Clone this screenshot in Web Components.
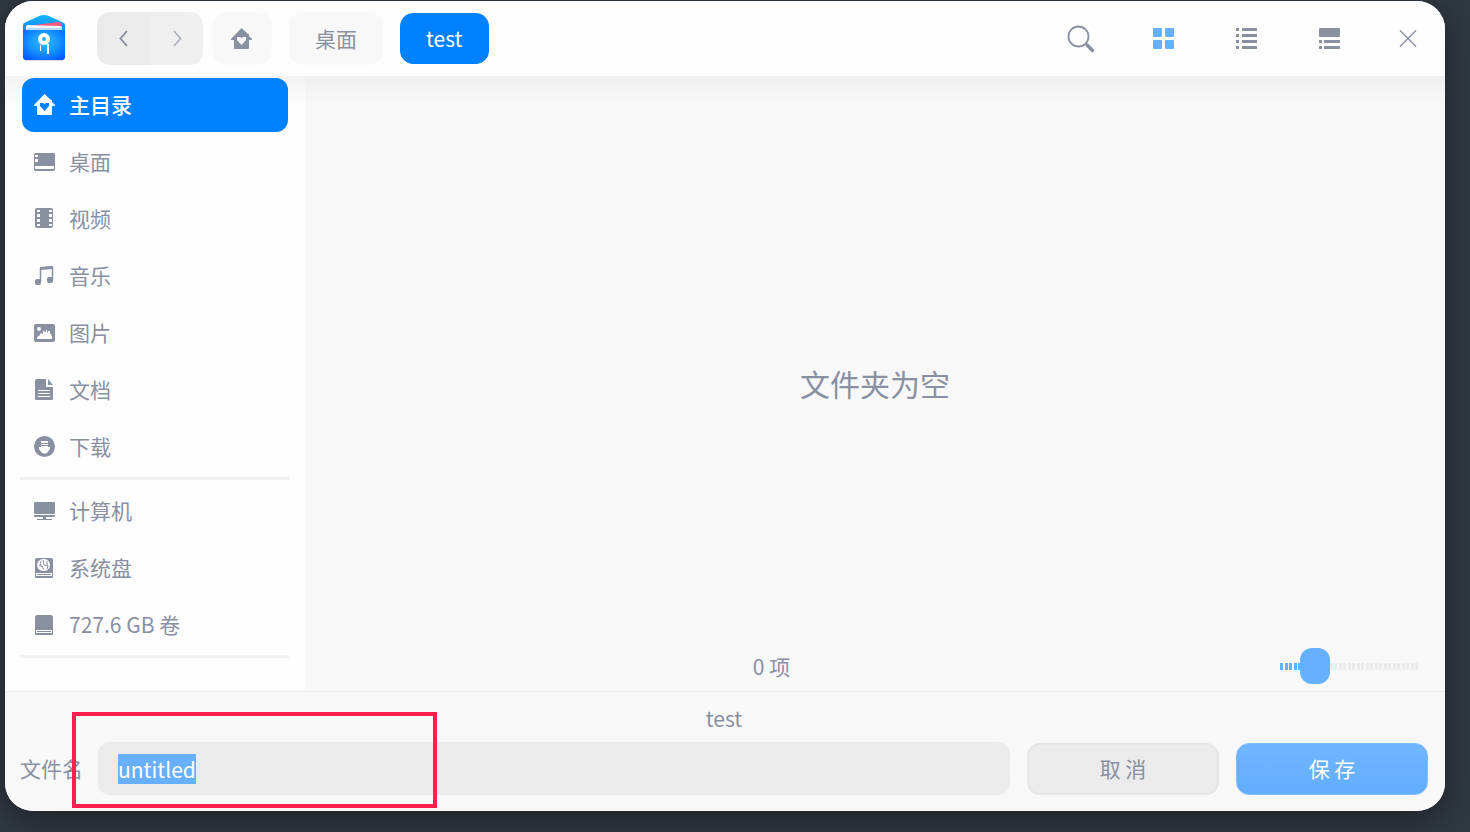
<!DOCTYPE html>
<html lang="zh-CN">
<head>
<meta charset="utf-8">
<title>保存文件</title>
<style>
  body {
    margin: 0;
    min-height: 100vh;
    display: flex;
    overflow: hidden;
    background: #303841;
    font-family: "Noto Sans CJK SC", sans-serif;
    font-size: 21px;
    line-height: 33px;
    color: #8990a1;
    --accent: #0081ff;
    --accent-soft: #65b0ff;
    --panel: #f8f8f8;
    --surface: #fdfdfd;
    --line: #f1f1f1;
  }
</style>
</head>
<body>
<save-dialog></save-dialog>

<script>
const icons = {
  logo: `<svg width="42" height="47" viewBox="0 0 42 47">
    <defs>
      <radialGradient id="body" cx=".5" cy=".4" r=".7"><stop offset="0" stop-color="#32bdff"/><stop offset=".5" stop-color="#1596ff"/><stop offset="1" stop-color="#0558ff"/></radialGradient>
      <linearGradient id="lid" x2="0" y2="1"><stop offset="0" stop-color="#17b4ff"/><stop offset="1" stop-color="#087af2"/></linearGradient>
    </defs>
    <path fill="#d9dde3" d="M2 44h38v2H2z"/>
    <path fill="url(#lid)" d="M0 10q0-2 3-3l11-5q7-4 14 0l11 5q3 1 3 3v12H0z"/>
    <path fill="#ff5876" d="M3 11l33-4q2 0 2 2v5H3z"/>
    <path fill="#f3f7ff" d="M3 12q0-2 2-2l32 1q2 0 2 2v5H3z"/>
    <path fill="#b9daf8" d="M4 13h35v2H4z"/>
    <path fill="url(#body)" d="M0 15h42v27q0 3-3 3H3q-3 0-3-3z"/>
    <circle cx="21" cy="24" r="4" fill="none" stroke="#fff" stroke-width="4"/>
    <path fill="#fff" d="M17 30h1v6h-1zM24 29h2v10h-2z"/>
  </svg>`,
  home: `<svg width="22" height="22" viewBox="0 0 22 22"><path fill="currentColor" fill-rule="evenodd" d="M10.500 0l6.500 6h1v2l3 3v1h-3v8q0 1-1 1H4q-1 0-1-1v-8H0v-1zM10.500 17l4.500-5V9h-3l-1.500 1L9 9H6v3z"/></svg>`,
  back: `<svg width="10" height="18" viewBox="0 0 10 18"><path fill="none" stroke="currentColor" stroke-width="1.900" d="M8 1L1.500 8.500 8 16"/></svg>`,
  forward: `<svg width="10" height="18" viewBox="0 0 10 18"><path fill="none" stroke="currentColor" stroke-width="1.700" d="M2 1l6.500 7.500L2 16"/></svg>`,
  search: `<svg width="28" height="28" viewBox="0 0 28 28"><circle cx="11.500" cy="11.500" r="10" fill="none" stroke="currentColor" stroke-width="1.8"/><path d="M18.500 18.500l3 3" stroke="currentColor" stroke-width="2.500"/><path d="M20.500 20.500l5 5" stroke="currentColor" stroke-width="3.500" stroke-linecap="round"/></svg>`,
  grid: `<svg width="21" height="21" viewBox="0 0 21 21" fill="currentColor"><rect width="9" height="9" rx="1"/><rect x="12" width="9" height="9" rx="1"/><rect y="12" width="9" height="9" rx="1"/><rect x="12" y="12" width="9" height="9" rx="1"/></svg>`,
  list: `<svg width="21" height="21" viewBox="0 0 21 21"><path fill="currentColor" d="M0 0h3v3H0zM6 0h15v3H6zM0 6h3v3H0zM6 6h15v3H6zM0 12h3v3H0zM6 12h15v3H6zM0 18h3v3H0zM6 18h15v3H6z"/></svg>`,
  detail: `<svg width="21" height="21" viewBox="0 0 21 21" fill="currentColor"><rect width="21" height="9" rx="1"/><path d="M0 12h3v3H0zM5 12h16v3H5zM0 18h3v3H0zM5 18h16v3H5z"/></svg>`,
  close: `<svg width="18" height="18" viewBox="0 0 18 18"><path stroke="currentColor" stroke-width="1.4" d="M1 .5l16 16M17 .5l-16 16"/></svg>`,
  desktop: `<svg width="22" height="22" viewBox="0 0 22 22"><path fill="currentColor" fill-rule="evenodd" d="M2 2h18q1 0 1 1v15q0 2-2 2H2q-2 0-2-2V3q0-1 2-1zM1 4v2h3V4zM1 8v3h3V8zM1 15v2q0 1 1 1h17q1 0 1-1v-2z"/></svg>`,
  video: `<svg width="22" height="22" viewBox="0 0 22 22"><path fill="currentColor" fill-rule="evenodd" d="M3 0h14q2 0 2 2v16q0 2-2 2H3q-2 0-2-2V2q0-2 2-2zM3 2v2h3V2zM3 6v3h3V6zM3 11v3h3v-3zM3 16v2h3v-2zM15 2v2h3V2zM15 6v3h3V6zM15 11v3h3v-3zM15 16v2h3v-2z"/></svg>`,
  music: `<svg width="22" height="22" viewBox="0 0 22 22"><path fill="none" stroke="currentColor" stroke-width="1.500" d="M6.500 17V3.500Q12 2 18.500 2v13"/><path fill="currentColor" d="M6 2l13-1v3L6 5z"/><rect x="1" y="14" width="6" height="6" rx="2" fill="currentColor"/><rect x="13" y="12" width="6" height="6" rx="2" fill="currentColor"/></svg>`,
  picture: `<svg width="22" height="22" viewBox="0 0 22 22"><path fill="currentColor" fill-rule="evenodd" d="M2 2h17q2 0 2 2v14q0 2-2 2H2q-2 0-2-2V4q0-2 2-2zM5 5a2 2 0 100 4 2 2 0 000-4zM3 17h15v-3l-2-3v-2h-2v2l-1-1V8h-1v2l-3-1v3l-2-1-2 3-2 1z"/></svg>`,
  doc: `<svg width="22" height="22" viewBox="0 0 22 22"><path fill="currentColor" fill-rule="evenodd" d="M3 0h9v8h7v12q0 1-2 1H3q-2 0-2-1V2q0-2 2-2zM14 0l5 6h-5zM4 11v1h12v-1zM4 14v1h12v-1zM4 17v1h12v-1z"/></svg>`,
  download: `<svg width="22" height="22" viewBox="0 0 22 22"><path fill="currentColor" fill-rule="evenodd" d="M10.500 0a10.500 10.500 0 100 21 10.500 10.500 0 000-21zM7 5h7v2H7zM7 8h7v1H7zM7 10h7v1h2v2l-3 4q-2 1-5 0l-3-4v-2h2z"/></svg>`,
  computer: `<svg width="22" height="22" viewBox="0 0 22 22" fill="currentColor"><rect y="2" width="21" height="12" rx="1"/><path d="M0 15h21v1q0 1-1 1H1q-1 0-1-1zM9 17h3v2H9zM3 19h15v1H3z"/></svg>`,
  system: `<svg width="22" height="22" viewBox="0 0 22 22"><path fill="currentColor" fill-rule="evenodd" d="M3 1h14q2 0 2 2v17q0 1-1 1H2q-1 0-1-1V3q0-2 2-2zM2 16v3h16v-3zM9 2a6 6 0 100 12 6 6 0 002-12z"/><path fill="currentColor" d="M3 17h14v1H3z"/><path fill="none" stroke="currentColor" d="M7 4q-2 5 3 8M9 3l1 5 4 1M13 4v3q2 2 0 5M5 8l4 2"/></svg>`,
  disk: `<svg width="22" height="22" viewBox="0 0 22 22"><path fill="currentColor" fill-rule="evenodd" d="M3 1h14q2 0 2 2v17q0 1-1 1H2q-1 0-1-1V3q0-2 2-2zM2 16v3h16v-3z"/><path fill="currentColor" d="M3 17h14v1H3z"/></svg>`
};

class DialogIcon extends HTMLElement {
  connectedCallback() {
    this.attachShadow({ mode: "open" });
    this.shadowRoot.innerHTML = `
      <style>
        :host { display: block; flex: none; }
        svg { display: block; }
      </style>
      ${icons[this.getAttribute("name")]}
    `;
    this.shadowRoot.querySelector("svg").setAttribute("aria-hidden", "true");
  }
}

class PathCrumb extends HTMLElement {
  connectedCallback() {
    this.attachShadow({ mode: "open" });
    this.shadowRoot.innerHTML = `
      <style>
        :host { display: block; }
        button {
          box-sizing: border-box;
          height: 53px;
          padding: 0 25px;
          border: 1px solid #fafafa;
          border-radius: 13px;
          background: var(--panel);
          color: inherit;
          font: inherit;
          display: flex;
          align-items: center;
        }
        :host([icon]) button { padding: 0 18px; }
        :host([current]) button {
          height: 51px;
          border-color: var(--accent);
          background: var(--accent);
          color: #fff;
        }
      </style>
      <button type="button" aria-label="${this.getAttribute("label") || this.textContent}"><slot></slot></button>
    `;
  }
}

class ToolButton extends HTMLElement {
  connectedCallback() {
    this.attachShadow({ mode: "open" });
    this.shadowRoot.innerHTML = `
      <style>
        :host { display: block; width: 83px; }
        :host([active]) { color: var(--accent-soft); }
        :host([last]) { width: 73px; }
        button {
          width: 100%;
          height: 53px;
          padding: 0;
          border: 0;
          background: none;
          color: inherit;
          display: grid;
          place-items: center;
        }
      </style>
      <button type="button" aria-label="${this.getAttribute("label")}">
        <dialog-icon name="${this.getAttribute("icon")}"></dialog-icon>
      </button>
    `;
  }
}

class DialogHeader extends HTMLElement {
  connectedCallback() {
    this.attachShadow({ mode: "open" });
    this.shadowRoot.innerHTML = `
      <style>
        :host {
          box-sizing: border-box;
          height: 75px;
          padding: 0 1px 0 18px;
          display: flex;
          align-items: center;
          background: var(--surface);
        }
        .history {
          display: flex;
          margin: 0 9px 0 32px;
          border-radius: 13px;
          overflow: hidden;
        }
        .history button {
          width: 54px;
          height: 53px;
          padding: 0;
          border: 0;
          display: grid;
          place-items: center;
          color: inherit;
          background: #ebebeb;
        }
        .history button:last-child { width: 52px; background: #efefef; color: #adb1bd; }
        nav { display: flex; align-items: center; gap: 17px; }
        .tools { display: flex; margin-left: auto; }
      </style>
      <dialog-icon name="logo"></dialog-icon>
      <div class="history">
        <button type="button" aria-label="后退"><dialog-icon name="back"></dialog-icon></button>
        <button type="button" aria-label="前进"><dialog-icon name="forward"></dialog-icon></button>
      </div>
      <nav>
        <path-crumb icon label="主目录"><dialog-icon name="home"></dialog-icon></path-crumb>
        <path-crumb>桌面</path-crumb>
        <path-crumb current>test</path-crumb>
      </nav>
      <div class="tools">
        <tool-button icon="search" label="搜索"></tool-button>
        <tool-button icon="grid" label="图标视图" active></tool-button>
        <tool-button icon="list" label="列表视图"></tool-button>
        <tool-button icon="detail" label="详细视图"></tool-button>
        <tool-button icon="close" label="关闭" last></tool-button>
      </div>
    `;
  }
}

class PlaceItem extends HTMLElement {
  connectedCallback() {
    this.attachShadow({ mode: "open" });
    this.shadowRoot.innerHTML = `
      <style>
        :host { display: block; }
        a {
          height: 54px;
          padding: 0 12px;
          display: flex;
          align-items: center;
          gap: 13px;
          border-radius: 12px;
          color: inherit;
          text-decoration: none;
        }
        span { padding-bottom: 2px; }
        :host([current]) a { background: var(--accent); color: #fff; font-weight: 500; }
      </style>
      <a href="#"><dialog-icon name="${this.getAttribute("icon")}"></dialog-icon><span><slot></slot></span></a>
    `;
  }
}

class PlacesSidebar extends HTMLElement {
  connectedCallback() {
    this.attachShadow({ mode: "open" });
    this.shadowRoot.innerHTML = `
      <style>
        :host {
          box-sizing: border-box;
          width: 300px;
          padding: 2px 16px 0 15px;
          background: linear-gradient(#f3f3f3, var(--surface) 30px);
        }
        nav { display: flex; flex-direction: column; gap: 3px; }
        place-item { margin: 0 1px 0 2px; }
        hr {
          width: 100%;
          height: 3px;
          margin: 0 0 1px;
          border: 0;
          background: var(--line);
        }
      </style>
      <nav>
        <place-item icon="home" current>主目录</place-item>
        <place-item icon="desktop">桌面</place-item>
        <place-item icon="video">视频</place-item>
        <place-item icon="music">音乐</place-item>
        <place-item icon="picture">图片</place-item>
        <place-item icon="doc">文档</place-item>
        <place-item icon="download">下载</place-item>
        <hr>
        <place-item icon="computer">计算机</place-item>
        <place-item icon="system">系统盘</place-item>
        <place-item icon="disk">727.6 GB 卷</place-item>
        <hr>
      </nav>
    `;
  }
}

class SizeSlider extends HTMLElement {
  connectedCallback() {
    this.attachShadow({ mode: "open" });
    this.shadowRoot.innerHTML = `
      <style>
        :host { display: block; width: 138px; }
        input {
          -webkit-appearance: none;
          appearance: none;
          display: block;
          width: 100%;
          height: 36px;
          margin: 0;
          background: none;
        }
        input::-webkit-slider-runnable-track {
          height: 7px;
          background:
            repeating-linear-gradient(90deg, var(--accent-soft) 0 3px, var(--panel) 3px 5px, var(--accent-soft) 5px 8px, var(--panel) 8px 9px) 0 0 / 30px 7px no-repeat,
            repeating-linear-gradient(90deg, #ebebeb 0 3px, var(--panel) 3px 5px, #ebebeb 5px 8px, var(--panel) 8px 9px);
        }
        input::-webkit-slider-thumb {
          -webkit-appearance: none;
          width: 30px;
          height: 36px;
          margin-top: -15px;
          border-radius: 12px;
          background: var(--accent-soft);
        }
      </style>
      <input type="range" min="0" max="108" value="20" aria-label="图标大小">
    `;
  }
}

class FolderView extends HTMLElement {
  connectedCallback() {
    this.attachShadow({ mode: "open" });
    this.shadowRoot.innerHTML = `
      <style>
        :host {
          flex: 1;
          display: grid;
          background: linear-gradient(#efefef, var(--panel) 30px);
        }
        .empty, .status { grid-area: 1 / 1; }
        .empty {
          margin: 0;
          place-self: center;
          font-size: 30px;
          line-height: 45px;
        }
        .status {
          align-self: end;
          height: 50px;
          padding-right: 27px;
          display: flex;
          align-items: center;
          gap: 42px;
        }
        .count { flex: 1; text-align: center; }
      </style>
      <p class="empty">文件夹为空</p>
      <div class="status">
        <span class="count">0 项</span>
        <size-slider></size-slider>
      </div>
    `;
  }
}

class DialogButton extends HTMLElement {
  connectedCallback() {
    this.attachShadow({ mode: "open" });
    this.shadowRoot.innerHTML = `
      <style>
        :host { display: block; width: 192px; }
        button {
          width: 100%;
          height: 52px;
          padding: 0;
          border: 2px solid #e6e6e6;
          border-radius: 13px;
          background: #ebebeb;
          color: inherit;
          font: inherit;
        }
        :host([primary]) button {
          border: 1px solid #7dbcff;
          background: linear-gradient(#70b6ff, #62adff);
          color: #fff;
        }
      </style>
      <button type="button"><slot></slot></button>
    `;
  }
}

class FileNameBar extends HTMLElement {
  connectedCallback() {
    this.attachShadow({ mode: "open" });
    this.shadowRoot.innerHTML = `
      <style>
        :host {
          display: block;
          position: relative;
          padding: 10px 17px 16px 15px;
          border-top: 1px solid #ececec;
          background: var(--panel);
        }
        .title { margin: 0 0 7px; text-align: center; }
        form { display: flex; align-items: center; gap: 17px; }
        .field { flex: 1; display: flex; align-items: center; gap: 15px; }
        input {
          box-sizing: border-box;
          flex: 1;
          min-width: 0;
          height: 53px;
          padding: 0 20px;
          border: 0;
          border-radius: 12px;
          outline: none;
          background: #ebebeb;
          color: inherit;
          font: inherit;
          line-height: 33px;
        }
        input::selection { background: rgba(101, 176, 255, 0.996); color: #fff; }
        /* frame over the file name field */
        .mark {
          position: absolute;
          left: 67px;
          top: 20px;
          box-sizing: border-box;
          width: 365px;
          height: 96px;
          border: 4px solid #ff1f4c;
          pointer-events: none;
        }
      </style>
      <p class="title">test</p>
      <form>
        <div class="field">
          <label for="fileName">文件名</label>
          <input id="fileName" type="text" value="untitled" autocomplete="off" spellcheck="false">
        </div>
        <dialog-button>取 消</dialog-button>
        <dialog-button primary>保 存</dialog-button>
      </form>
      <div class="mark"></div>
    `;
    const input = this.shadowRoot.getElementById("fileName");
    input.focus();
    input.select();
  }
}

class SaveDialog extends HTMLElement {
  connectedCallback() {
    this.attachShadow({ mode: "open" });
    this.shadowRoot.innerHTML = `
      <style>
        :host {
          flex: 1;
          margin: 1px 25px 21px 5px;
          display: flex;
          flex-direction: column;
          border-radius: 28px;
          overflow: hidden;
          background: var(--panel);
          box-shadow: 0 8px 36px rgba(0, 0, 0, 0.4);
        }
        main { flex: 1; display: flex; }
      </style>
      <dialog-header></dialog-header>
      <main>
        <places-sidebar></places-sidebar>
        <folder-view></folder-view>
      </main>
      <file-name-bar></file-name-bar>
    `;
  }
}

customElements.define("dialog-icon", DialogIcon);
customElements.define("path-crumb", PathCrumb);
customElements.define("tool-button", ToolButton);
customElements.define("dialog-header", DialogHeader);
customElements.define("place-item", PlaceItem);
customElements.define("places-sidebar", PlacesSidebar);
customElements.define("size-slider", SizeSlider);
customElements.define("folder-view", FolderView);
customElements.define("dialog-button", DialogButton);
customElements.define("file-name-bar", FileNameBar);
customElements.define("save-dialog", SaveDialog);
</script>
</body>
</html>
